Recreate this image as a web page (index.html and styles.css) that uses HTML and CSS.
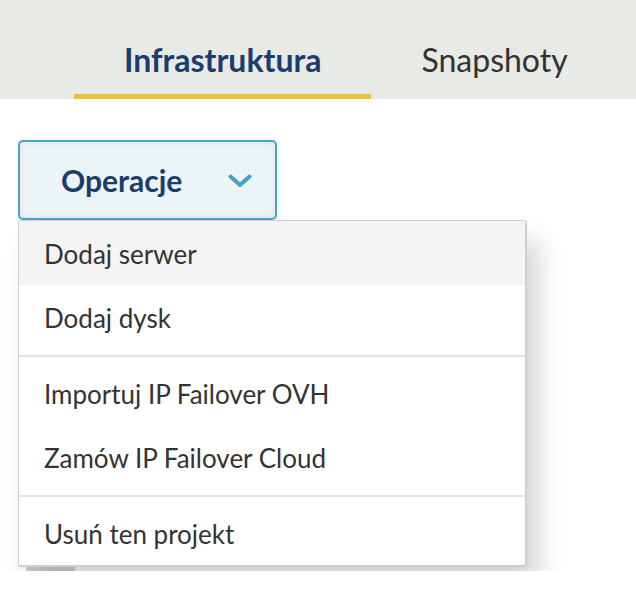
FILE: index.html
```html
<!DOCTYPE html>
<html lang="pl">
<head>
<meta charset="utf-8">
<title>Infrastruktura</title>
<link rel="stylesheet" href="styles.css">
</head>
<body>
<header class="tabs-bar">
  <nav class="tabs">
    <a class="tab tab-active">Infrastruktura</a>
    <a class="tab">Snapshoty</a>
  </nav>
</header>
<main class="content">
  <div class="dropdown">
    <button class="dropdown-toggle" type="button">
      <span class="dropdown-label">Operacje</span>
      <svg class="chevron" width="24" height="14" viewBox="0 0 24 14" aria-hidden="true">
        <polyline points="2.5,2.5 12,11 21.5,2.5" fill="none" stroke="#43a1c3" stroke-width="4" stroke-linecap="round" stroke-linejoin="round"/>
      </svg>
    </button>
    <div class="dropdown-menu">
      <div class="menu-group">
        <div class="menu-item menu-item-hover">Dodaj serwer</div>
        <div class="menu-item">Dodaj dysk</div>
      </div>
      <div class="menu-sep"></div>
      <div class="menu-group">
        <div class="menu-item">Importuj IP Failover OVH</div>
        <div class="menu-item">Zamów IP Failover Cloud</div>
      </div>
      <div class="menu-sep"></div>
      <div class="menu-group">
        <div class="menu-item">Usuń ten projekt</div>
      </div>
    </div>
  </div>
  <div class="under-content">
    <div class="under-box"></div>
  </div>
</main>
</body>
</html>
```
FILE: styles.css
```css
* { box-sizing: border-box; }
html, body {
  margin: 0;
  padding: 0;
  background: #ffffff;
  font-family: Lato, "Liberation Sans", sans-serif;
  color: #333333;
}
.tabs-bar {
  background: #e8eae6;
  height: 99px;
  display: flex;
  align-items: flex-end;
  padding-left: 74px;
}
.tabs {
  display: flex;
}
.tab {
  display: block;
  font-size: 32px;
  line-height: 36px;
  padding: 0 50px 16px 50px;
  border-bottom: 5px solid transparent;
  color: #333333;
}
.tab-active {
  font-weight: 700;
  color: #1b3d6b;
  border-bottom-color: #e8c23c;
}
.content {
  padding: 41px 18px 0;
}
.dropdown {
  position: relative;
  width: 259px;
}
.dropdown-toggle {
  display: flex;
  align-items: center;
  width: 259px;
  height: 80px;
  padding: 0 23px 0 41px;
  background: #ecf4f8;
  border: 2px solid #47a3c2;
  border-radius: 5px;
  box-shadow: inset 0 0 7px rgba(0, 0, 0, 0.07), 2px 2px 6px rgba(0, 0, 0, 0.06);
  font-family: Lato, "Liberation Sans", sans-serif;
  font-size: 30px;
  font-weight: 700;
  color: #1b3d6b;
  cursor: pointer;
}
.chevron {
  margin-left: auto;
  margin-top: 2px;
}
.dropdown-menu {
  position: absolute;
  left: 0;
  top: 80px;
  width: 509px;
  background: #ffffff;
  border: 1px solid #cfcfcf;
  border-right-width: 2px;
  border-bottom-width: 2px;
  border-radius: 3px;
  box-shadow: 12px 20px 26px rgba(0, 0, 0, 0.17);
  z-index: 2;
}
.menu-item {
  height: 64px;
  padding: 18px 0 0 25px;
  font-size: 26px;
  line-height: 30px;
  color: #333333;
}
.menu-item-hover {
  background: #f4f4f4;
}
.menu-sep {
  height: 2px;
  background: #e2e2e2;
  margin: 6px 0 4px;
}
.under-content {
  padding: 315px 0 0 8px;
}
.under-box {
  width: 49px;
  height: 36px;
  background: #d2d2d2;
}
```
